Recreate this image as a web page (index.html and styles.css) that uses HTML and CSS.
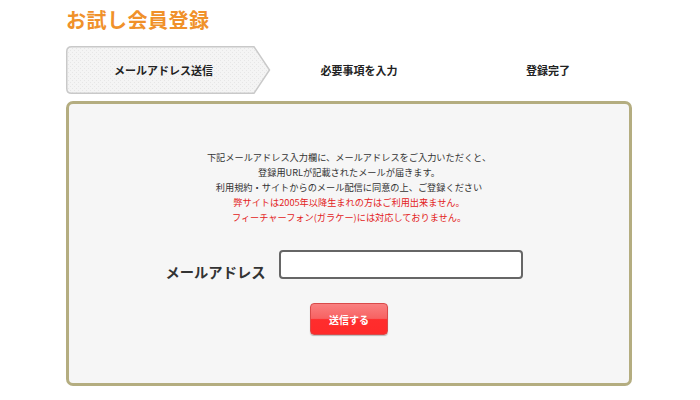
FILE: index.html
```html
<!DOCTYPE html>
<html lang="ja">
<head>
<meta charset="utf-8">
<title>お試し会員登録</title>
<link rel="stylesheet" href="styles.css">
</head>
<body>
<div class="page">
  <h1 class="title">お試し会員登録</h1>
  <ol class="steps">
    <li class="step step-active">
      <svg class="step-bg" width="205" height="48" viewBox="0 0 205 48" aria-hidden="true">
        <defs>
          <pattern id="dots" width="4" height="4" patternUnits="userSpaceOnUse">
            <rect width="4" height="4" fill="#f4f4f4"/>
            <rect x="0" y="0" width="1" height="1" fill="#e6e6e6"/>
            <rect x="2" y="2" width="1" height="1" fill="#e6e6e6"/>
          </pattern>
        </defs>
        <path d="M5.5 0.75 H188 L203.5 24 L188 47.25 H5.5 Q0.75 47.25 0.75 42.5 V5.5 Q0.75 0.75 5.5 0.75 Z" fill="url(#dots)" stroke="#c9c9c9" stroke-width="1.5"/>
      </svg>
      <span class="step-label">メールアドレス送信</span>
    </li>
    <li class="step step-2"><span class="step-label">必要事項を入力</span></li>
    <li class="step step-3"><span class="step-label">登録完了</span></li>
  </ol>
  <div class="panel">
    <div class="notes">
      <p>下記メールアドレス入力欄に、メールアドレスをご入力いただくと、</p>
      <p>登録用URLが記載されたメールが届きます。</p>
      <p>利用規約・サイトからのメール配信に同意の上、ご登録ください</p>
      <p class="warn">弊サイトは2005年以降生まれの方はご利用出来ません。</p>
      <p class="warn">フィーチャーフォン(ガラケー)には対応しておりません。</p>
    </div>
    <form class="form">
      <div class="field">
        <label class="field-label" for="mail">メールアドレス</label>
        <input class="field-input" id="mail" type="text">
      </div>
      <button class="submit" type="button">送信する</button>
    </form>
  </div>
</div>
</body>
</html>
```

FILE: styles.css
```css
* { box-sizing: border-box; }
html, body { margin: 0; padding: 0; background: #fff; }
body {
  font-family: "Noto Sans CJK JP", "Noto Sans", sans-serif;
  color: #333;
}
.page {
  width: 566px;
  margin-left: 66px;
  padding-top: 7px;
}
.title {
  margin: 0;
  font-size: 20px;
  line-height: 26px;
  font-weight: 700;
  color: #f0912a;
  letter-spacing: 0.5px;
}
.steps {
  list-style: none;
  margin: 13px 0 0;
  padding: 0;
  display: flex;
  height: 48px;
}
.step {
  position: relative;
  flex-shrink: 0;
  display: flex;
  align-items: center;
  justify-content: center;
  height: 48px;
  font-size: 11px;
  font-weight: 700;
  color: #222;
}
.step-active { width: 205px; padding-right: 10px; }
.step-bg { position: absolute; left: 0; top: 0; }
.step-label { position: relative; }
.step-2 { width: 176px; }
.step-3 { width: 202px; }
.panel {
  margin-top: 7px;
  height: 285px;
  border: 3px solid #b4ad80;
  border-radius: 7px;
  background: #f6f6f6;
  padding-top: 46px;
}
.notes {
  text-align: center;
  font-size: 9.2px;
  line-height: 15px;
  color: #333;
}
.notes p { margin: 0; }
.notes .warn { color: #e32222; }
.form {
  margin-top: 22px;
  display: flex;
  flex-direction: column;
  align-items: center;
}
.field {
  display: flex;
  align-items: center;
  gap: 13px;
  margin-right: 10px;
}
.field-label {
  font-size: 14.3px;
  font-weight: 700;
  color: #333;
  margin-top: 14px;
}
.field-input {
  width: 244px;
  height: 29px;
  border: 2px solid #666;
  border-radius: 4px;
  background: #fff;
  outline: none;
}
.submit {
  margin-top: 21px;
  width: 78px;
  height: 32px;
  border: 1px solid #d94a4a;
  border-radius: 4px;
  background: linear-gradient(to bottom, #f98080 0%, #f76262 48%, #ff2d2d 52%, #ff2a2a 100%);
  box-shadow: 0 1px 1px rgba(0,0,0,0.25);
  color: #fff;
  font-family: "Noto Sans CJK JP", sans-serif;
  font-size: 10px;
  font-weight: 700;
  padding: 0;
}
```
